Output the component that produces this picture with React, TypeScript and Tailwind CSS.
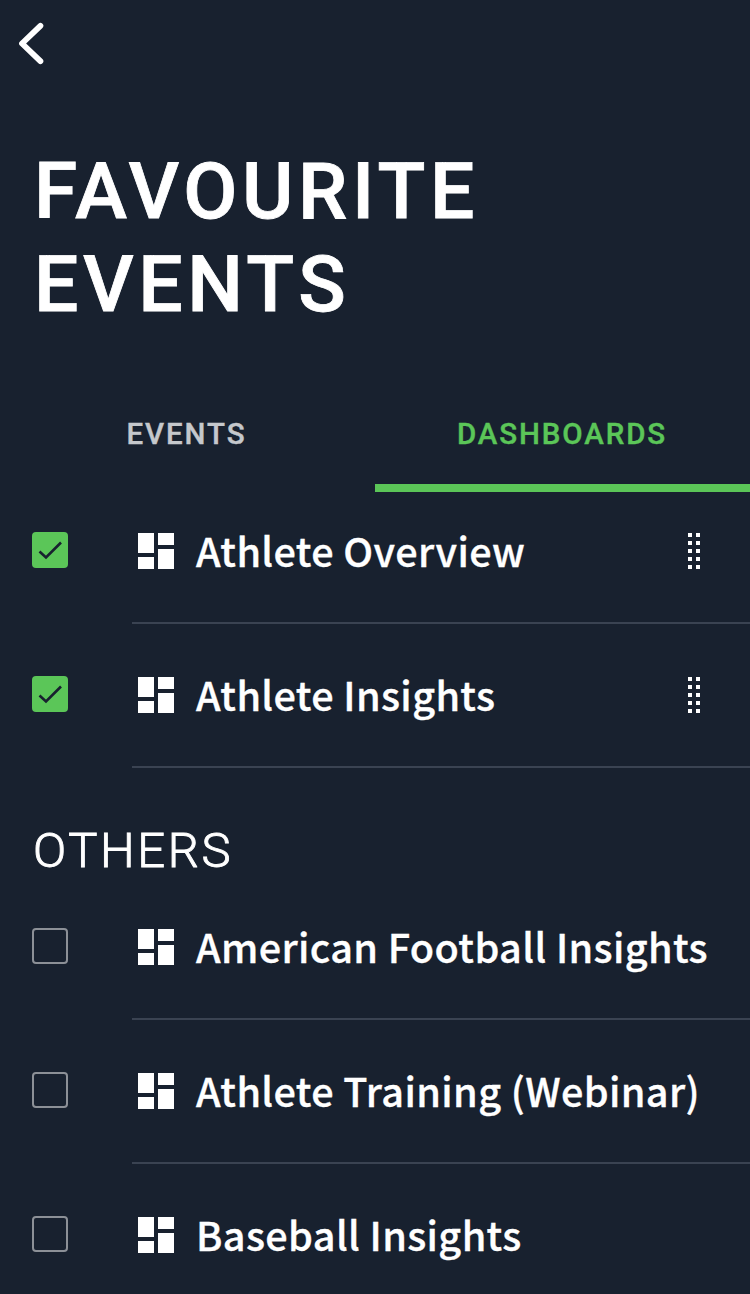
import { useState } from "react";

const FAVOURITES = ["Athlete Overview", "Athlete Insights"];
const OTHERS = [
  "American Football Insights",
  "Athlete Training (Webinar)",
  "Baseball Insights",
];

function DashboardIcon() {
  return (
    <svg width="36" height="36" viewBox="0 0 36 36" fill="currentColor">
      <path d="M0 0h16v20H0zM0 24h16v12H0zM20 0h16v12H20zM20 16h16v20H20z" />
    </svg>
  );
}

function DragHandle() {
  return (
    <div className="ml-auto mr-[50px] grid grid-cols-2 gap-1">
      {Array.from({ length: 10 }, (_, i) => (
        <span key={i} className="size-1 bg-white" />
      ))}
    </div>
  );
}

function Checkbox({
  checked,
  onClick,
}: {
  checked: boolean;
  onClick: () => void;
}) {
  return (
    <button
      role="checkbox"
      aria-checked={checked}
      onClick={onClick}
      className={
        checked
          ? "ml-8 mt-[52px] size-9 shrink-0 rounded-[4px] bg-[#5bc658]"
          : "ml-8 mt-[52px] size-9 shrink-0 rounded-[4px] border-2 border-[#8c9097]"
      }
    >
      {checked && (
        <svg width="36" height="36" viewBox="0 0 36 36" fill="none">
          <path d="M7.5 19.5l6.5 6L29 10.5" stroke="#18212f" strokeWidth="2.6" />
        </svg>
      )}
    </button>
  );
}

function DashboardRow({
  name,
  favourite = false,
}: {
  name: string;
  favourite?: boolean;
}) {
  const [checked, setChecked] = useState(favourite);

  return (
    <li className="flex h-36">
      <Checkbox checked={checked} onClick={() => setChecked(!checked)} />
      <div className="ml-16 flex flex-1 items-center border-b-2 border-[#3a4352] pl-1.5">
        <DashboardIcon />
        <span className="mb-0.5 ml-[22px] whitespace-nowrap font-['Noto_Sans_CJK_SC',sans-serif] text-[39.6px] font-medium leading-[60px] tracking-[0.38px] [-webkit-text-stroke:0.35px]">
          {name}
        </span>
        {favourite && <DragHandle />}
      </div>
    </li>
  );
}

function App() {
  const [tab, setTab] = useState("DASHBOARDS");

  return (
    <div className="h-[1294px] w-[750px] overflow-hidden bg-[#18212f] font-[Roboto,sans-serif] text-white">
      <header className="h-[140px] pl-[18px] pt-[22px]">
        <svg width="28" height="44" viewBox="0 0 28 44" fill="none">
          <path
            d="M22.4 3.8L4 21.5l18.4 17.7"
            stroke="currentColor"
            strokeWidth="5.8"
            strokeLinecap="round"
            strokeLinejoin="round"
          />
        </svg>
      </header>

      <h1 className="h-[252px] pl-[34px] pt-[5px] text-[78.5px] font-medium leading-[93px] tracking-[4.6px] [-webkit-text-stroke:0.8px]">
        FAVOURITE
        <br />
        EVENTS
      </h1>

      <nav className="grid h-[100px] grid-cols-2">
        {["EVENTS", "DASHBOARDS"].map((item) => (
          <button
            key={item}
            onClick={() => setTab(item)}
            className={
              tab === item
                ? "border-b-8 border-[#5bc658] pb-2 pr-px text-[29.5px] font-medium tracking-[1.9px] text-[#5bc658] [-webkit-text-stroke:0.4px]"
                : "border-b-8 border-transparent pb-2 pr-0.5 text-[29.5px] font-medium tracking-[1.9px] text-[#c5c8cc] [-webkit-text-stroke:0.4px]"
            }
          >
            {item}
          </button>
        ))}
      </nav>

      <ul className="-mt-3">
        {FAVOURITES.map((name) => (
          <DashboardRow key={name} name={name} favourite />
        ))}
      </ul>

      <h2 className="h-[108px] pl-[33px] pt-[54px] text-[49px] font-light leading-[58px] tracking-[2.6px] [-webkit-text-stroke:0.9px]">
        OTHERS
      </h2>
      <ul>
        {OTHERS.map((name) => (
          <DashboardRow key={name} name={name} />
        ))}
      </ul>
    </div>
  );
}

export default App;
